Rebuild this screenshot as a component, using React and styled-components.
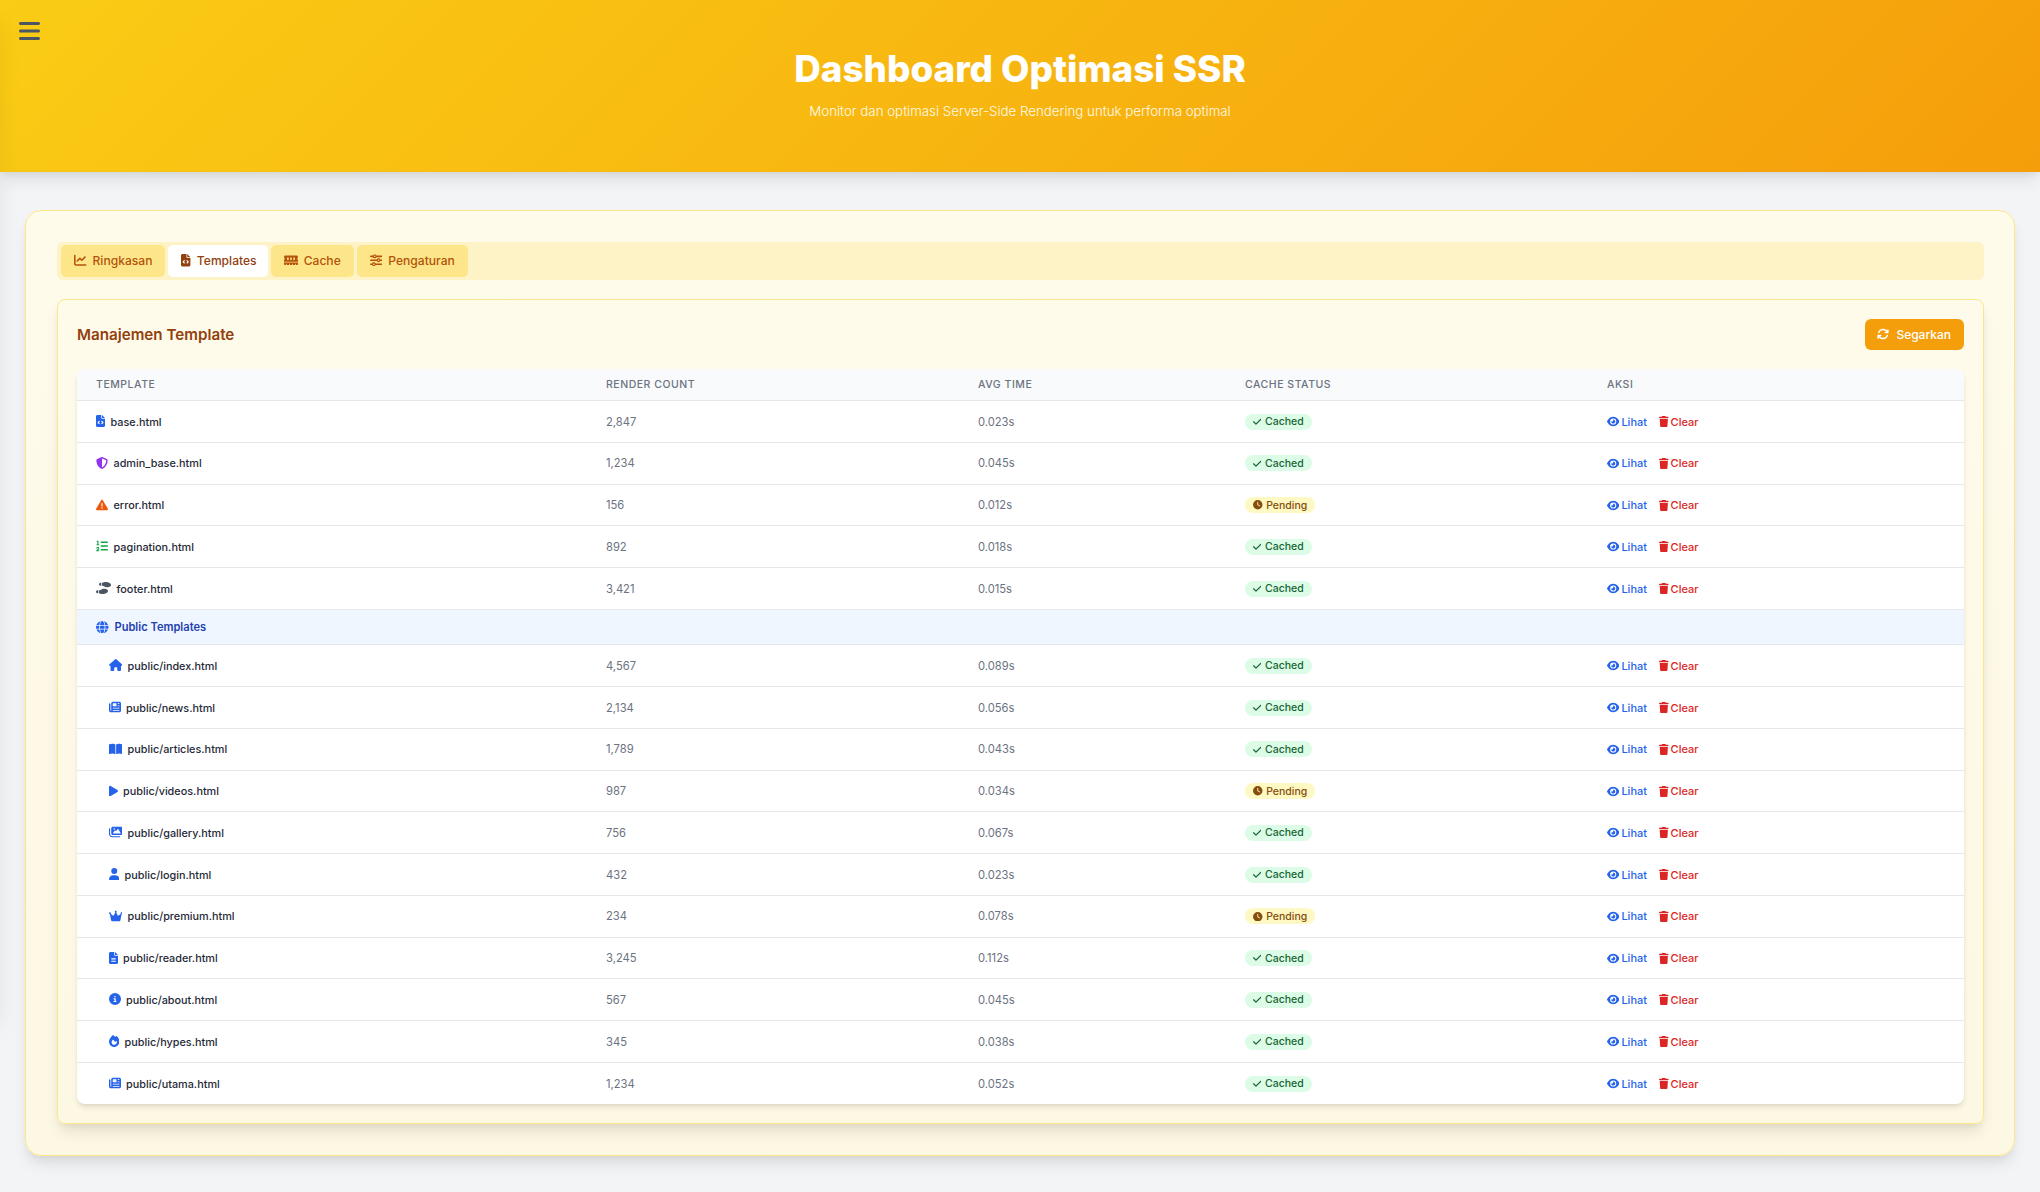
import React from 'react';
import styled, {createGlobalStyle} from 'styled-components';
import {
	FaArrowsRotate, FaBars, FaBookOpen, FaChartLine, FaCheck, FaCircleInfo, FaClock, FaCrown, FaEye,
	FaFileCode, FaFileLines, FaFire, FaGlobe, FaHouse, FaImages, FaListOl, FaMemory, FaNewspaper,
	FaPlay, FaShieldHalved, FaShoePrints, FaSliders, FaTrash, FaTriangleExclamation, FaUser,
} from 'react-icons/fa6';

const GlobalStyle = createGlobalStyle`
	html, body {
		margin: 0;
		padding: 0;
		background: #f3f4f6;
		font-family: Inter, "Liberation Sans", sans-serif;
	}
	svg {
		flex-shrink: 0;
	}
`;

// closed sidebar, parked off the left edge: only its shadow shows
const Sidebar = styled.aside`
	position: fixed;
	top: 0;
	left: -256px;
	width: 256px;
	height: 1010px;
	background: #fff;
	box-shadow: 0 20px 25px -5px rgba(0, 0, 0, 0.1), 0 10px 10px -5px rgba(0, 0, 0, 0.04);
	z-index: 10;
`;

const Header = styled.header`
	position: relative;
	height: 172px;
	box-sizing: border-box;
	padding-top: 47px;
	text-align: center;
	background: linear-gradient(135deg, #facc15, #f59e0b);
	box-shadow: 0 10px 15px -3px rgba(0, 0, 0, 0.1), 0 4px 6px -2px rgba(0, 0, 0, 0.05);
`;

const MenuButton = styled.button`
	position: absolute;
	top: 19px;
	left: 19px;
	padding: 0;
	display: flex;
	border: none;
	background: none;
	color: #4b5563;
	svg {
		width: 21px;
		height: 24px;
	}
`;

const Title = styled.h1`
	margin: 0;
	color: #fff;
	font-size: 36.8px;
	line-height: 44px;
	font-weight: 800;
`;

const Subtitle = styled.p`
	margin: 10px 0 0;
	color: #fffbeb;
	font-size: 13.3px;
	line-height: 20px;
	font-weight: 300;
`;

const Main = styled.main`
	padding: 38px 25px 36px;
`;

const Card = styled.section`
	box-sizing: border-box;
	padding: 31px 30px 31px 31px;
	border: 1px solid #fde68a;
	border-radius: 16px;
	background: linear-gradient(180deg, #fffbeb, #fdf8e3);
	box-shadow: 0 10px 15px -3px rgba(0, 0, 0, 0.1), 0 4px 6px -2px rgba(0, 0, 0, 0.05);
`;

const TabBar = styled.nav`
	display: flex;
	gap: 3px;
	height: 38px;
	box-sizing: border-box;
	padding: 3px 4px;
	border-radius: 6px;
	background: #fef3c7;
	margin-bottom: 19px;
`;

const Tab = styled.button`
	display: flex;
	align-items: center;
	gap: 6px;
	padding: 0 ${p => (p.$active ? '11px' : '13px')} 1px 13px;
	border: none;
	border-radius: 5px;
	background: ${p => (p.$active ? '#fff' : '#fde68a')};
	color: ${p => (p.$active ? '#92400e' : '#b45309')};
	font-family: inherit;
	font-size: 12.1px;
	font-weight: 500;
	svg {
		height: 12.5px;
		width: ${p => p.$iconWidth}px;
	}
`;

const Panel = styled.div`
	padding: 19px;
	border: 1px solid #fde68a;
	border-radius: 8px;
	background: linear-gradient(180deg, #fffbeb, #fdf8e3);
	box-shadow: 0 10px 15px -3px rgba(0, 0, 0, 0.1), 0 4px 6px -2px rgba(0, 0, 0, 0.05);
`;

const PanelHead = styled.div`
	display: flex;
	justify-content: space-between;
	align-items: center;
	margin-bottom: 19px;
`;

const PanelTitle = styled.h2`
	margin: 0;
	color: #92400e;
	font-size: 15.2px;
	font-weight: 600;
`;

const RefreshButton = styled.button`
	display: flex;
	align-items: center;
	gap: 7px;
	height: 31px;
	padding: 0 13px 1px 12px;
	border: none;
	border-radius: 6px;
	background: #f59e0b;
	color: #fff;
	font-family: inherit;
	font-size: 12px;
	font-weight: 500;
	svg {
		width: 12px;
		height: 12px;
	}
`;

const TableWrap = styled.div`
	border-radius: 8px;
	overflow: hidden;
	background: #fff;
	box-shadow: 0 4px 6px -1px rgba(0, 0, 0, 0.1), 0 2px 4px -1px rgba(0, 0, 0, 0.06);
`;

const Table = styled.table`
	width: 100%;
	table-layout: fixed;
	border-collapse: separate;
	border-spacing: 0;
`;

const Th = styled.th`
	height: 31px;
	padding: 0 0 0 19px;
	background: #f9fafb;
	border-bottom: 1px solid #e5e7eb;
	color: #6b7280;
	font-size: 10.5px;
	font-weight: 500;
	letter-spacing: 0.05em;
	text-align: left;
	text-transform: uppercase;
`;

const Td = styled.td`
	height: ${p => (p.$last ? '41px' : '41.75px')};
	box-sizing: border-box;
	padding: 0.5px 0 0 19px;
	border-bottom: ${p => (p.$last ? 'none' : '1px solid #e5e7eb')};
	color: #6b7280;
	font-size: 11.2px;
`;

const NameCell = styled.div`
	display: flex;
	align-items: center;
	gap: 5.5px;
	padding-left: ${p => (p.$child ? '12.5px' : '0')};
	color: #1f2937;
	font-size: 10.85px;
	font-weight: 500;
	svg {
		width: ${p => p.$iconWidth}px;
		height: 12px;
		color: ${p => p.$color};
		position: relative;
		top: -0.5px;
	}
`;

const GroupCell = styled.td`
	height: 35.5px;
	box-sizing: border-box;
	padding: 0 0 0 19px;
	background: #eff6ff;
	border-bottom: 1px solid #e5e7eb;
`;

const GroupLabel = styled.div`
	display: flex;
	align-items: center;
	gap: 6px;
	color: #1e40af;
	font-size: 11.1px;
	font-weight: 600;
	svg {
		width: 12.5px;
		height: 12.5px;
		color: #2563eb;
	}
`;

const Badge = styled.span`
	display: inline-flex;
	align-items: center;
	gap: 3.7px;
	padding: 1.5px 8px;
	border-radius: 999px;
	background: ${p => (p.$pending ? '#fef9c3' : '#dcfce7')};
	color: ${p => (p.$pending ? '#854d0e' : '#166534')};
	font-size: 10.5px;
	line-height: 13px;
	font-weight: 500;
	svg {
		width: ${p => (p.$pending ? '9.5px' : '8.3px')};
		height: 9.5px;
	}
`;

const Actions = styled.div`
	display: flex;
	gap: 12px;
`;

const ActionLink = styled.a`
	display: flex;
	align-items: center;
	gap: 2px;
	color: ${p => p.$color};
	font-size: 11px;
	font-weight: 500;
	svg {
		width: ${p => p.$iconWidth}px;
		height: 11px;
	}
`;

// width is the icon's viewBox width, height is always 512
const main = [
	[FaFileCode, 384, '#2563eb', 'base.html', '2,847', '0.023s'],
	[FaShieldHalved, 512, '#9333ea', 'admin_base.html', '1,234', '0.045s'],
	[FaTriangleExclamation, 512, '#ea580c', 'error.html', '156', '0.012s', true],
	[FaListOl, 512, '#16a34a', 'pagination.html', '892', '0.018s'],
	[FaShoePrints, 640, '#4b5563', 'footer.html', '3,421', '0.015s'],
];

const pub = [
	[FaHouse, 576, 'public/index.html', '4,567', '0.089s'],
	[FaNewspaper, 512, 'public/news.html', '2,134', '0.056s'],
	[FaBookOpen, 576, 'public/articles.html', '1,789', '0.043s'],
	[FaPlay, 384, 'public/videos.html', '987', '0.034s', true],
	[FaImages, 576, 'public/gallery.html', '756', '0.067s'],
	[FaUser, 448, 'public/login.html', '432', '0.023s'],
	[FaCrown, 576, 'public/premium.html', '234', '0.078s', true],
	[FaFileLines, 384, 'public/reader.html', '3,245', '0.112s'],
	[FaCircleInfo, 512, 'public/about.html', '567', '0.045s'],
	[FaFire, 448, 'public/hypes.html', '345', '0.038s'],
	[FaNewspaper, 512, 'public/utama.html', '1,234', '0.052s'],
];

function Row({icon: Icon, vb, color, name, count, time, pending, child, last}) {
	return (
		<tr>
			<Td $last={last}>
				<NameCell $child={child} $color={color} $iconWidth={(vb * 12) / 512}>
					<Icon />
					{name}
				</NameCell>
			</Td>
			<Td $last={last}>{count}</Td>
			<Td $last={last}>{time}</Td>
			<Td $last={last}>
				<Badge $pending={pending}>
					{pending ? <FaClock /> : <FaCheck />}
					{pending ? 'Pending' : 'Cached'}
				</Badge>
			</Td>
			<Td $last={last}>
				<Actions>
					<ActionLink $color="#2563eb" $iconWidth={12.4}><FaEye />Lihat</ActionLink>
					<ActionLink $color="#dc2626" $iconWidth={9.6}><FaTrash />Clear</ActionLink>
				</Actions>
			</Td>
		</tr>
	);
}

function App() {
	return (
		<>
			<GlobalStyle />
			<Sidebar />
			<Header>
				<MenuButton><FaBars /></MenuButton>
				<Title>Dashboard Optimasi SSR</Title>
				<Subtitle>Monitor dan optimasi Server-Side Rendering untuk performa optimal</Subtitle>
			</Header>
			<Main>
				<Card>
					<TabBar>
						<Tab $iconWidth={12.5}><FaChartLine />Ringkasan</Tab>
						<Tab $active $iconWidth={9.4}><FaFileCode />Templates</Tab>
						<Tab $iconWidth={14}><FaMemory />Cache</Tab>
						<Tab $iconWidth={12.5}><FaSliders />Pengaturan</Tab>
					</TabBar>
					<Panel>
						<PanelHead>
							<PanelTitle>Manajemen Template</PanelTitle>
							<RefreshButton><FaArrowsRotate />Segarkan</RefreshButton>
						</PanelHead>
						<TableWrap>
							<Table>
								<colgroup>
									<col style={{width: 510}} />
									<col style={{width: 372}} />
									<col style={{width: 267}} />
									<col style={{width: 362}} />
									<col />
								</colgroup>
								<thead>
									<tr>
										<Th>Template</Th>
										<Th>Render Count</Th>
										<Th>Avg Time</Th>
										<Th>Cache Status</Th>
										<Th>Aksi</Th>
									</tr>
								</thead>
								<tbody>
									{main.map(r => (
										<Row key={r[3]} icon={r[0]} vb={r[1]} color={r[2]} name={r[3]} count={r[4]} time={r[5]} pending={r[6]} />
									))}
									<tr>
										<GroupCell colSpan={5}>
											<GroupLabel><FaGlobe />Public Templates</GroupLabel>
										</GroupCell>
									</tr>
									{pub.map((r, i) => (
										<Row key={r[2]} child icon={r[0]} vb={r[1]} color="#2563eb" name={r[2]} count={r[3]} time={r[4]} pending={r[5]} last={i === pub.length - 1} />
									))}
								</tbody>
							</Table>
						</TableWrap>
					</Panel>
				</Card>
			</Main>
		</>
	);
}

export default App;
